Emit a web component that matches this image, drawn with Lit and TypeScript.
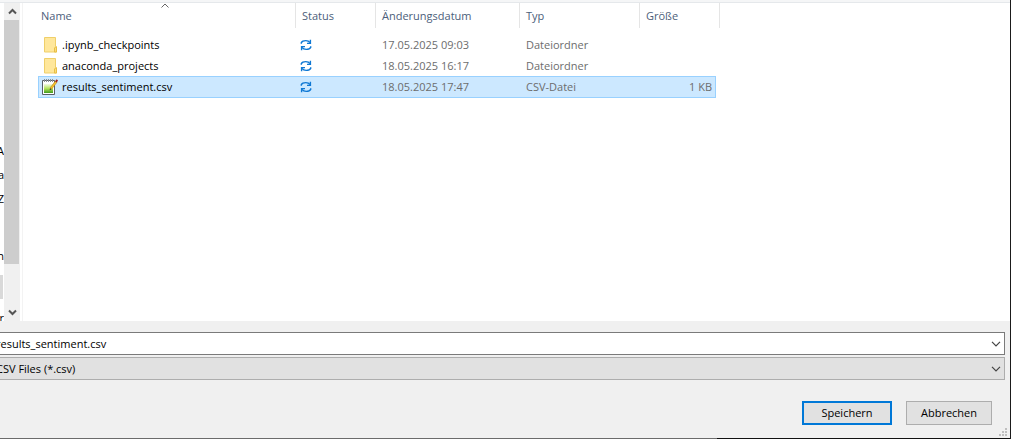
import { LitElement, html, css, svg } from "lit";
import { customElement, state } from "lit/decorators.js";
import { classMap } from "lit/directives/class-map.js";

interface Entry {
  name: string;
  kind: "folder" | "csv";
  changed: string;
  type: string;
  size: string;
}

const entries: Entry[] = [
  { name: ".ipynb_checkpoints", kind: "folder", changed: "17.05.2025 09:03", type: "Dateiordner", size: "" },
  { name: "anaconda_projects", kind: "folder", changed: "18.05.2025 16:17", type: "Dateiordner", size: "" },
  { name: "results_sentiment.csv", kind: "csv", changed: "18.05.2025 17:47", type: "CSV-Datei", size: "1 KB" },
];

const folderIcon = svg`<svg class="file-icon" viewBox="0 0 16 16" aria-hidden="true">
  <path d="M2.500 .5h11v9h1v5.500h-12z" fill="#ffe79b" stroke="#efcf6a"/>
  <path d="M12.500 15v-4l1-1h1v5z" fill="#fbdc7c" stroke="#e8bf45"/>
</svg>`;

const csvIcon = svg`<svg class="file-icon" viewBox="0 0 16 16" aria-hidden="true">
  <defs>
    <linearGradient id="sheet" x1="0" y1="0" x2="0" y2="1">
      <stop offset="0" stop-color="#f4fbe6"/>
      <stop offset=".5" stop-color="#b4e35c"/>
      <stop offset="1" stop-color="#3f9a1c"/>
    </linearGradient>
  </defs>
  <path d="M.5 1.500h12v14H.5z" fill="#fff" stroke="#5a5f66"/>
  <path d="M2 5h9v9H2z" fill="url(#sheet)"/>
  <path d="M2.500 0v3M4.500 0v3M6.500 0v3M8.500 0v3M10.500 0v3" stroke="#8b9096"/>
  <path d="M8 10.500l.6-2.200 4.800-6.300 1.600 1.200-4.800 6.200z" fill="#f7c22c" stroke="#a8741a" stroke-width=".5"/>
  <path d="M13.100 2.300L14.600 .3l1.400 1.200-1.300 2z" fill="#9c1c1c"/>
  <path d="M7.600 11.200l.6-2 1.300 1z" fill="#333"/>
</svg>`;

const syncIcon = svg`<svg class="sync-icon" viewBox="0 0 12 12" role="img" aria-label="Wird synchronisiert">
  <g fill="none" stroke="#0f78d4" stroke-width="1.4">
    <path d="M1.300 4.700V3.600C2 2.200 3.700 1.600 5.800 1.600c1.900 0 3.300.7 4.200 2.100"/>
    <path d="M10.400 .8v3.600H7"/>
    <path d="M10.700 7.300v1.100C10 9.800 8.300 10.400 6.200 10.400c-1.900 0-3.300-.7-4.200-2.100"/>
    <path d="M1.600 11.200V7.600H5"/>
  </g>
</svg>`;

const chevron = svg`<svg class="chevron" viewBox="0 0 10 6" aria-hidden="true">
  <path d="M1 .8l4 4 4-4" fill="none" stroke="#444" stroke-width="1.2"/>
</svg>`;

@customElement("app-root")
export class AppRoot extends LitElement {
  @state() private selected = 2;
  @state() private fileName = "results_sentiment.csv";

  static styles = css`
    :host {
      display: block;
      font: 11px/16px "Open Sans", "Noto Sans", sans-serif;
      color: #000;
    }
    * { box-sizing: border-box; }
    .dialog {
      display: flex;
      flex-direction: column;
      height: 100vh;
      overflow: hidden;
      background: #f0f0f0;
      border-right: 1px solid #1b1b1b;
    }
    .toolbar-edge {
      height: 3px;
      flex: none;
      background: #f5f6f7;
      border-bottom: 1px solid #e5e8eb;
    }
    .bottom-edge {
      height: 1px;
      flex: none;
      background: linear-gradient(to right, #6b6b6b 71%, #111 71%);
    }
    .browser {
      flex: 1;
      min-height: 0;
      display: flex;
      background: #fff;
    }
    .tree {
      width: 4px;
      flex: none;
      overflow: hidden;
      display: flex;
      flex-direction: column;
      padding-top: 136px;
    }
    .tree a {
      flex: none;
      display: flex;
      justify-content: flex-end;
      height: 24px;
      line-height: 24px;
      color: #000;
      text-decoration: none;
    }
    .tree .group { margin-top: 33px; }
    .tree .current {
      width: 3px;
      margin: 7px 0;
      background: #d9d9d9;
    }
    .scrollbar {
      width: 16px;
      flex: none;
      display: flex;
      flex-direction: column;
      background: #f0f0f0;
    }
    .scrollbar button {
      height: 17px;
      flex: none;
      padding: 0;
      border: 0;
      background: none;
      display: grid;
      place-items: center;
    }
    .scrollbar svg { width: 9px; height: 7px; }
    .track { flex: 1; padding-right: 1px; }
    .thumb { height: 86%; background: #cdcdcd; }
    .files {
      flex: 1;
      min-width: 0;
      margin-left: 2px;
      padding-left: 15px;
      border-left: 1px solid #f3f3f3;
    }
    table {
      width: 682px;
      table-layout: fixed;
      border-spacing: 0;
    }
    .c-name { width: 258px; }
    .c-status { width: 80px; }
    .c-date { width: 144px; }
    .c-type { width: 120px; }
    .c-size { width: 76px; }
    .c-end { width: 4px; }
    th {
      height: 25px;
      padding: 0 6px;
      border-right: 1px solid #e5e5e5;
      font-weight: 400;
      text-align: left;
      color: #4c607a;
    }
    th:first-child { padding-left: 3px; }
    .sortable { position: relative; }
    .sort-mark {
      position: absolute;
      top: 0;
      left: 48%;
      width: 8px;
      height: 5px;
    }
    .spacer td { height: 6px; padding: 0; }
    td {
      height: 21px;
      padding: 0 6px;
      color: #6d6d6d;
      white-space: nowrap;
    }
    td:first-child { padding-left: 4px; }
    .selected td {
      height: 22px;
      background: #cce8ff;
      border: solid #99d1ff;
      border-width: 1px 0;
    }
    .selected td:first-child { border-left-width: 1px; padding-left: 3px; }
    .selected td.size { border-right-width: 1px; }
    td.size { text-align: right; padding: 0 3px; }
    .file {
      display: flex;
      align-items: center;
      gap: 4px;
      color: #000;
    }
    .file-icon { width: 16px; height: 16px; flex: none; }
    .sync-icon { display: block; width: 12px; height: 12px; margin-left: -2px; }
    .fields {
      flex: none;
      display: grid;
      gap: 2px;
      padding: 11px 5px 0 0;
    }
    .field {
      height: 23px;
      display: flex;
      align-items: center;
      padding-right: 3px;
      border: 1px solid #adadad;
      border-left: 0;
      background: #e1e1e1;
    }
    .field.editable { background: #fff; border-color: #7a7a7a; }
    .field input, .field select {
      flex: 1;
      min-width: 0;
      height: 20px;
      margin: 0 0 0 -4px;
      padding: 0;
      border: 0;
      outline: 0;
      background: none;
      appearance: none;
      font: inherit;
      color: #000;
    }
    .chevron { width: 10px; height: 6px; flex: none; }
    .actions {
      flex: none;
      display: flex;
      justify-content: flex-end;
      gap: 14px;
      padding: 21px 18px 13px 0;
      position: relative;
    }
    .action {
      min-width: 86px;
      height: 24px;
      padding: 0 8px;
      border: 1px solid #adadad;
      background: #e1e1e1;
      font: inherit;
      color: #000;
    }
    .action.primary { min-width: 90px; border: 2px solid #0078d7; }
    .grip {
      position: absolute;
      right: 3px;
      bottom: 2px;
      width: 8px;
      height: 8px;
    }
  `;

  render() {
    return html`
      <main class="dialog">
        <div class="toolbar-edge"></div>
        <section class="browser">
          <nav class="tree" aria-label="Ordner">
            <a href="#">A</a>
            <a href="#">a</a>
            <a href="#">Z</a>
            <a class="group" href="#">n</a>
            <a class="current" href="#" aria-label="Aktueller Ordner"></a>
            <a href="#">r</a>
          </nav>
          <div class="scrollbar">
            <button aria-label="Nach oben">
              <svg viewBox="0 0 9 7"><path d="M1 5.500l3.500-3.500L8 5.500" fill="none" stroke="#555" stroke-width="2"/></svg>
            </button>
            <div class="track"><div class="thumb"></div></div>
            <button aria-label="Nach unten">
              <svg viewBox="0 0 9 7"><path d="M1 1.500l3.500 3.500L8 1.500" fill="none" stroke="#555" stroke-width="2"/></svg>
            </button>
          </div>
          <div class="files">
            <table>
              <colgroup>
                <col class="c-name"><col class="c-status"><col class="c-date">
                <col class="c-type"><col class="c-size"><col class="c-end">
              </colgroup>
              <thead>
                <tr>
                  <th class="sortable" aria-sort="ascending">Name
                    <svg class="sort-mark" viewBox="0 0 8 5" aria-hidden="true">
                      <path d="M.5 4.500L4 1l3.500 3.500" fill="none" stroke="#666"/>
                    </svg>
                  </th>
                  <th>Status</th>
                  <th>Änderungsdatum</th>
                  <th>Typ</th>
                  <th colspan="2">Größe</th>
                </tr>
              </thead>
              <tbody>
                <tr class="spacer"><td colspan="6"></td></tr>
                ${entries.map((e, i) => html`
                  <tr class=${classMap({ selected: i === this.selected })} @click=${() => this.pick(i)}>
                    <td><span class="file">${e.kind === "folder" ? folderIcon : csvIcon}${e.name}</span></td>
                    <td>${syncIcon}</td>
                    <td>${e.changed}</td>
                    <td>${e.type}</td>
                    <td class="size">${e.size}</td>
                  </tr>`)}
              </tbody>
            </table>
          </div>
        </section>
        <section class="fields">
          <div class="field editable">
            <input aria-label="Dateiname" .value=${this.fileName}>
            ${chevron}
          </div>
          <div class="field">
            <select aria-label="Dateityp"><option>CSV Files (*.csv)</option></select>
            ${chevron}
          </div>
        </section>
        <footer class="actions">
          <button class="action primary">Speichern</button>
          <button class="action">Abbrechen</button>
          <svg class="grip" viewBox="0 0 8 8" aria-hidden="true">
            <path d="M6 0h2v2H6zM3 3h2v2H3zM6 3h2v2H6zM0 6h2v2H0zM3 6h2v2H3zM6 6h2v2H6z" fill="#bfbfbf"/>
          </svg>
        </footer>
        <div class="bottom-edge"></div>
      </main>`;
  }

  private pick(index: number) {
    this.selected = index;
    if (entries[index].kind === "csv") this.fileName = entries[index].name;
  }
}
